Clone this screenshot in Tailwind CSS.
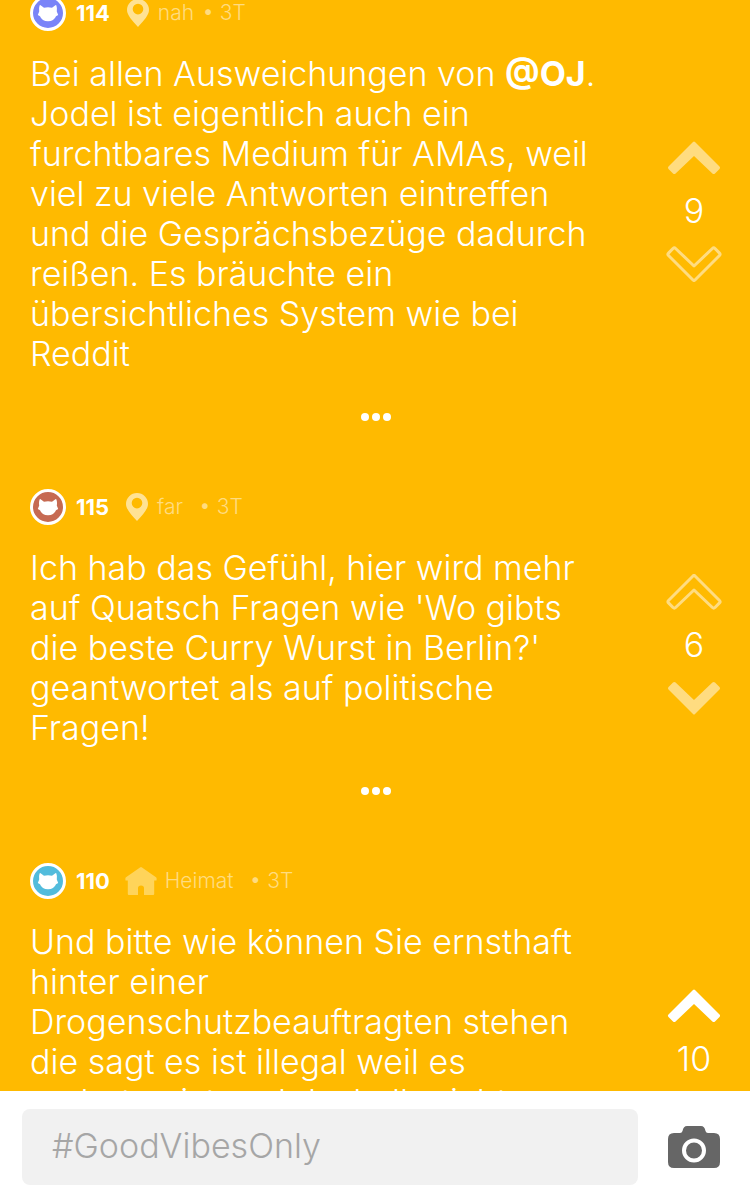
<!DOCTYPE html>
<html lang="de">
<head>
    <meta charset="UTF-8">
    <meta name="viewport" content="width=device-width, initial-scale=1.0">
    <title>Jodel</title>
    <script src="https://cdn.jsdelivr.net/npm/@tailwindcss/browser@4"></script>
</head>
<body class="flex flex-col h-screen overflow-hidden bg-[#ffba00] text-white font-['Inter',sans-serif] font-light">
    <!-- Shared icons -->
    <svg class="hidden">
        <symbol id="cat" viewBox="0 0 36 36">
            <circle cx="18" cy="18" r="16.5" stroke="#fff" stroke-width="3"/>
            <path fill="#fff" d="M9.600 10.600Q9.800 9.700 10.600 10.200L14 12.800q4-1 8 0l3.400-2.600q.8-.5 1 .4 1 2.900.4 5.900L28.200 20 26 21.200Q24 26.200 18 26.200T10 21.200L7.800 20l1.400-3.500q-.6-3 .4-5.900z"/>
        </symbol>
        <symbol id="pin" viewBox="0 0 22 28">
            <path fill="#ffe294" fill-rule="evenodd" d="M11 0a11 11 0 0 1 11 11c0 5-5 10.500-11 17C5 21.500 0 16 0 11A11 11 0 0 1 11 0zm0 4.800a5.300 5.300 0 1 0 0 10.600 5.300 5.300 0 0 0 0-10.600z"/>
        </symbol>
        <symbol id="house" viewBox="0 0 32 28">
            <path fill="#ffd45a" d="M15 .4q1-.7 2 0l14 9.800q.6.500.6 1.100V13q0 .6-.6.600h-1.800V27q0 1-1 1H19v-7q0-2.500-3-2.500t-3 2.500v7H3.800q-1 0-1-1V13.600H1q-.6 0-.6-.6v-1.700q0-.6.6-1.100z"/>
        </symbol>
        <symbol id="arrow" viewBox="0 0 56 36">
            <path stroke-linejoin="round" d="M27 2q1-1 2 0L53.500 26.500q1.200 1.200 0 2.400L49 33.500q-1.300 1.200-2.600 0L28 16 9.600 33.500q-1.300 1.200-2.600 0l-4.500-4.600q-1.200-1.200 0-2.400z"/>
        </symbol>
        <symbol id="dots" viewBox="0 0 30 8">
            <g fill="#fff"><circle cx="4" cy="4" r="4"/><circle cx="15" cy="4" r="4"/><circle cx="26" cy="4" r="4"/></g>
        </symbol>
    </svg>

    <main class="flex-1 min-h-0 overflow-hidden">
        <div class="-mt-[5px] flex flex-col gap-[62px]">
            <article class="grid grid-cols-[minmax(0,1fr)_56px] pl-[30px] pr-7">
                <header class="col-start-1 row-start-1 flex items-center h-9 text-[21px] text-[#ffdc80]">
                    <svg class="size-9 fill-[#7a84f8]"><use href="#cat"/></svg>
                    <b class="ml-[10px] text-[22px] font-bold text-white">114</b>
                    <svg class="ml-[17px] w-[22px] h-7"><use href="#pin"/></svg>
                    <span class="ml-[9px]">nah</span>
                    <span class="ml-2">• 3T</span>
                </header>
                <p class="col-start-1 row-start-2 mt-[23px] text-[34px] leading-10">Bei allen Ausweichungen von <b class="font-bold">@OJ</b>.<br>Jodel ist eigentlich auch ein<br>furchtbares Medium für AMAs, weil<br>viel zu viele Antworten eintreffen<br>und die Gesprächsbezüge dadurch<br>reißen. Es bräuchte ein<br>übersichtliches System wie bei<br>Reddit</p>
                <button class="col-start-1 col-span-2 row-start-3 justify-self-center mt-[33px] py-[6px] flex" aria-label="Mehr"><svg class="w-[30px] h-2"><use href="#dots"/></svg></button>
                <div class="col-start-2 row-start-1 row-span-3 self-center flex flex-col items-center gap-[17px] text-[34px] leading-9">
                    <button class="flex" aria-label="Hochvoten"><svg class="w-14 h-9 fill-[#ffdc80]"><use href="#arrow"/></svg></button>
                    <span>9</span>
                    <button class="flex" aria-label="Runtervoten"><svg class="w-14 h-9 rotate-180 fill-none stroke-[#ffdc80] stroke-3"><use href="#arrow"/></svg></button>
                </div>
            </article>

            <article class="grid grid-cols-[minmax(0,1fr)_56px] pl-[30px] pr-7">
                <header class="col-start-1 row-start-1 flex items-center h-9 text-[21px] text-[#ffdc80]">
                    <svg class="size-9 fill-[#c66a52]"><use href="#cat"/></svg>
                    <b class="ml-[10px] text-[22px] font-bold text-white">115</b>
                    <svg class="ml-[17px] w-[22px] h-7"><use href="#pin"/></svg>
                    <span class="ml-[9px]">far</span>
                    <span class="ml-4">• 3T</span>
                </header>
                <p class="col-start-1 row-start-2 mt-[23px] text-[34px] leading-10">Ich hab das Gefühl, hier wird mehr<br>auf Quatsch Fragen wie 'Wo gibts<br>die beste Curry Wurst in Berlin?'<br>geantwortet als auf politische<br>Fragen!</p>
                <button class="col-start-1 col-span-2 row-start-3 justify-self-center mt-[33px] py-[6px] flex" aria-label="Mehr"><svg class="w-[30px] h-2"><use href="#dots"/></svg></button>
                <div class="col-start-2 row-start-1 row-span-3 self-center flex flex-col items-center gap-[17px] text-[34px] leading-9">
                    <button class="flex" aria-label="Hochvoten"><svg class="w-14 h-9 fill-none stroke-[#ffdc80] stroke-3"><use href="#arrow"/></svg></button>
                    <span>6</span>
                    <button class="flex" aria-label="Runtervoten"><svg class="w-14 h-9 rotate-180 fill-[#ffdc80]"><use href="#arrow"/></svg></button>
                </div>
            </article>

            <article class="grid grid-cols-[minmax(0,1fr)_56px] grid-rows-[auto_1fr] min-h-[392px] pl-[30px] pr-7">
                <header class="col-start-1 row-start-1 flex items-center h-9 text-[21px] text-[#ffdc80]">
                    <svg class="size-9 fill-[#52bcdc]"><use href="#cat"/></svg>
                    <b class="ml-[10px] text-[22px] font-bold text-white">110</b>
                    <svg class="ml-[15px] w-8 h-7"><use href="#house"/></svg>
                    <span class="ml-2">Heimat</span>
                    <span class="ml-4">• 3T</span>
                </header>
                <p class="col-start-1 row-start-2 mt-[23px] text-[34px] leading-10">Und bitte wie können Sie ernsthaft<br>hinter einer<br>Drogenschutzbeauftragten stehen<br>die sagt es ist illegal weil es<br>verboten ist und deshalb nicht</p>
                <div class="col-start-2 row-start-1 row-span-2 self-center flex flex-col items-center gap-[17px] text-[34px] leading-9">
                    <button class="flex" aria-label="Hochvoten"><svg class="w-14 h-9 fill-white"><use href="#arrow"/></svg></button>
                    <span>10</span>
                    <button class="flex" aria-label="Runtervoten"><svg class="w-14 h-9 rotate-180 fill-none stroke-white stroke-3"><use href="#arrow"/></svg></button>
                </div>
            </article>
        </div>
    </main>

    <!-- Reply bar -->
    <form class="flex items-center gap-[30px] h-28 pl-[22px] pr-[30px] bg-white">
        <input type="text" aria-label="Antwort" placeholder="#GoodVibesOnly" class="flex-1 min-w-0 h-[76px] px-[30px] pb-1 rounded-lg bg-[#f1f1f1] text-[34px] text-gray-700 placeholder:text-[#a6a6a6] outline-none">
        <button type="button" aria-label="Foto">
            <svg class="w-[52px] h-[42px]" viewBox="0 0 52 42">
                <path fill="#666" d="M6 7h6q2 0 2.500-2Q15.500 0 19 0h14q3.500 0 4.500 5 .5 2 2.500 2h6q6 0 6 6v23q0 6-6 6H6q-6 0-6-6V13q0-6 6-6z"/>
                <circle cx="26" cy="24.500" r="10" fill="none" stroke="#fff" stroke-width="4"/>
            </svg>
        </button>
    </form>
</body>
</html>
